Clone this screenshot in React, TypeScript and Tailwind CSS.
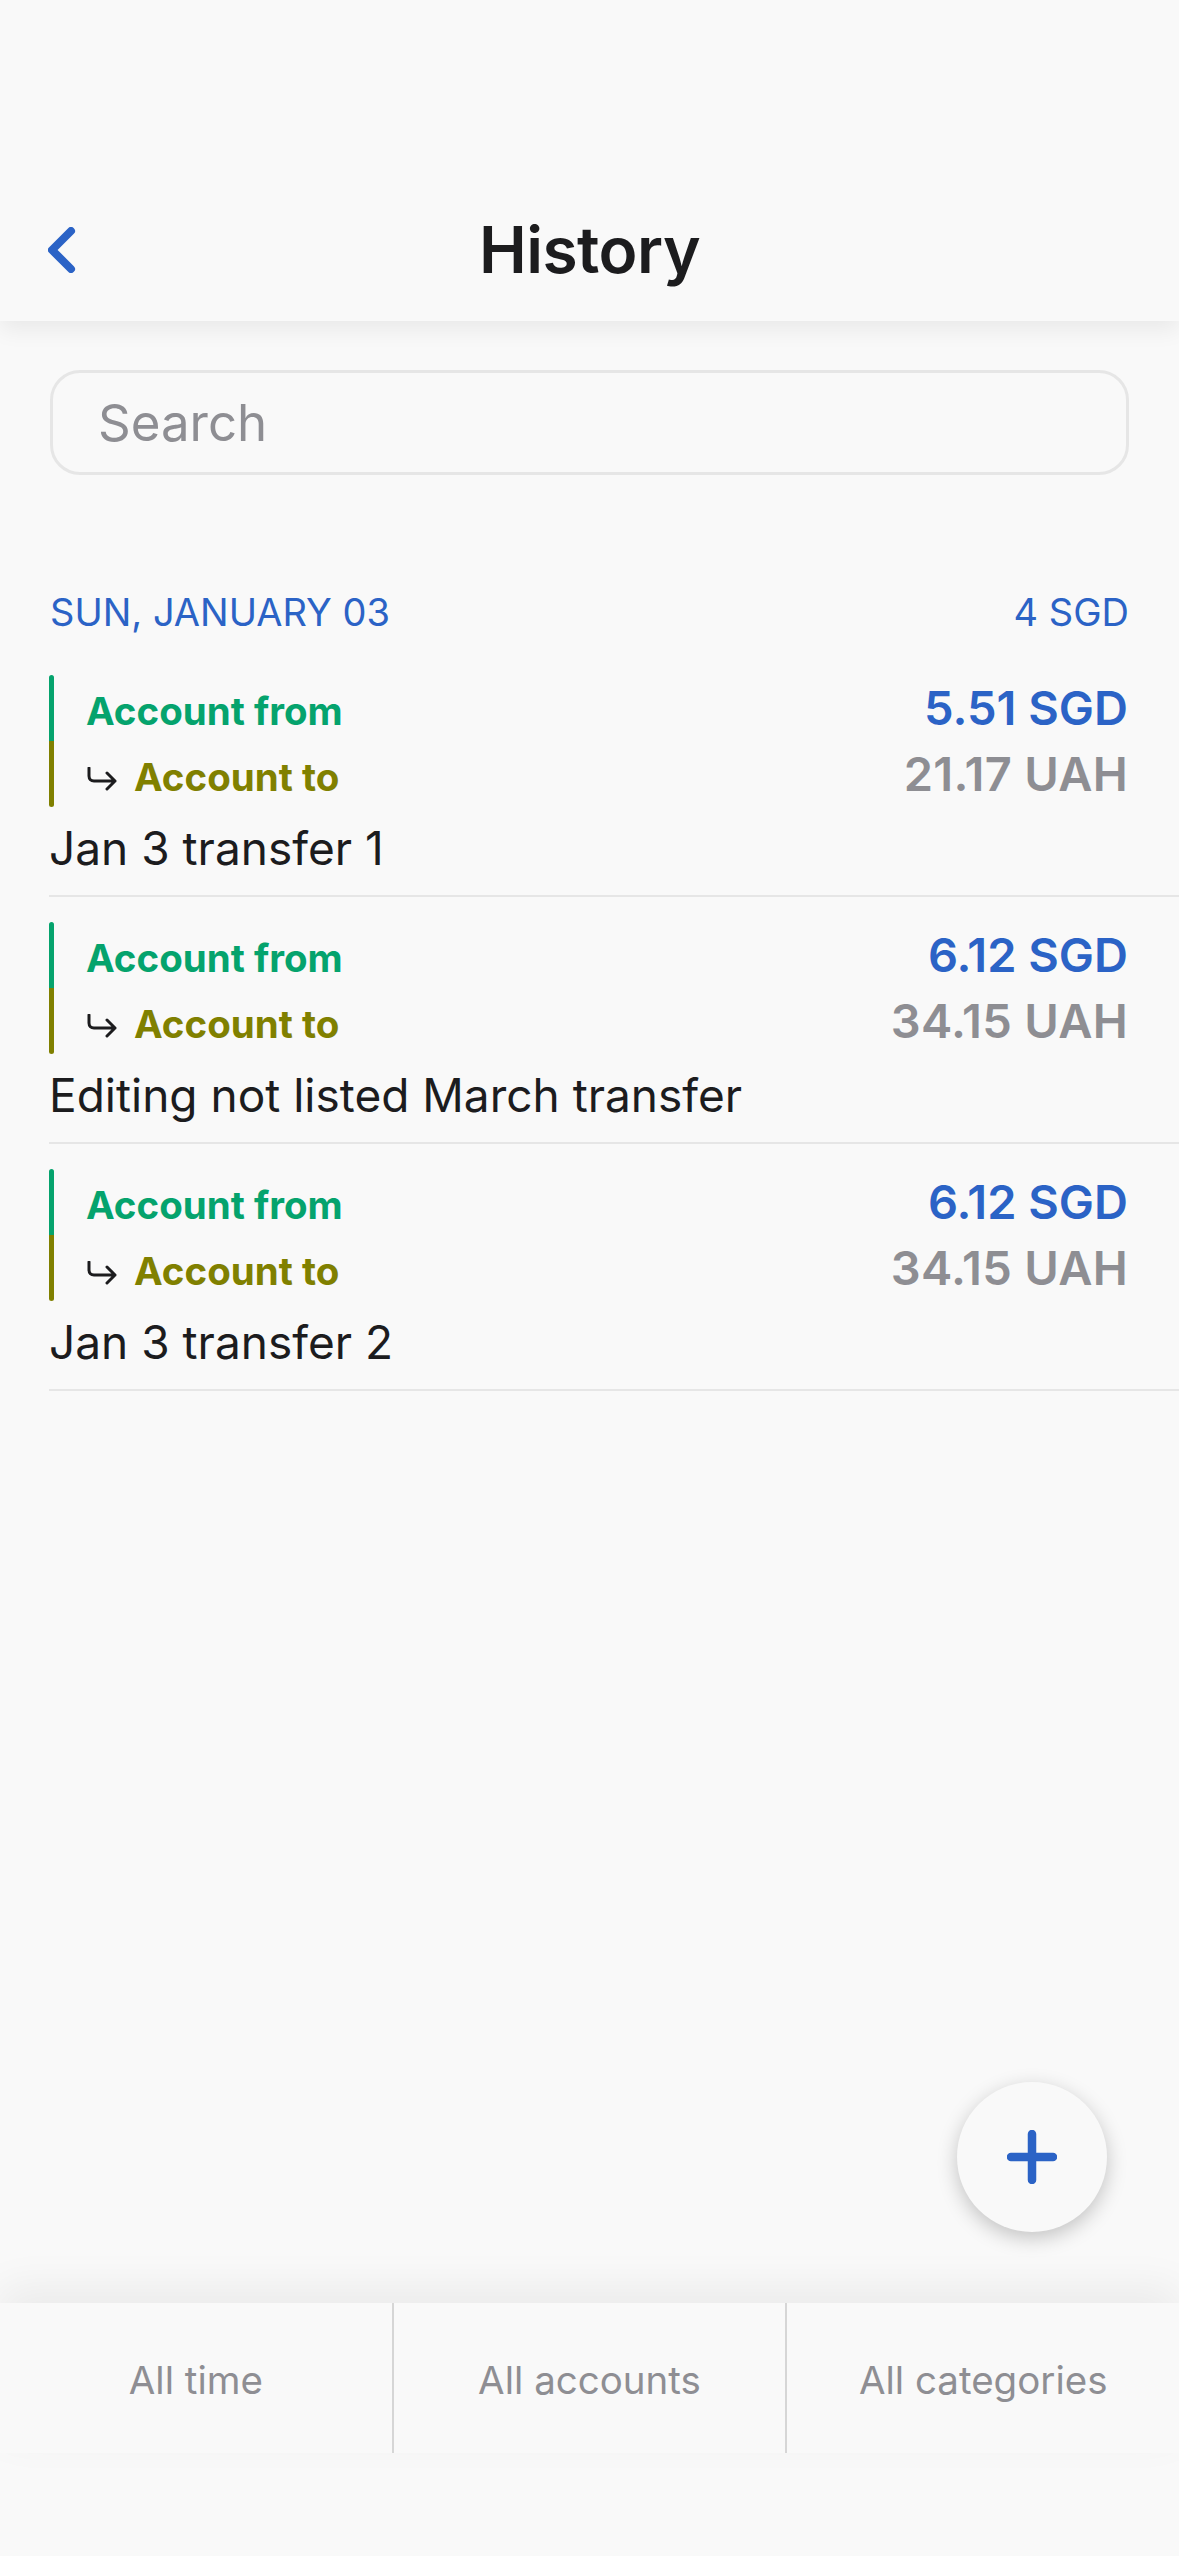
import React from 'react'

type Transfer = {
  amount: string
  converted: string
  note: string
}

const transfers: Transfer[] = [
  { amount: '5.51 SGD', converted: '21.17 UAH', note: 'Jan 3 transfer 1' },
  { amount: '6.12 SGD', converted: '34.15 UAH', note: 'Editing not listed March transfer' },
  { amount: '6.12 SGD', converted: '34.15 UAH', note: 'Jan 3 transfer 2' },
]

function HookArrow() {
  return (
    <svg width="32" height="26" viewBox="0 0 32 26" fill="none" className="shrink-0">
      <path
        d="M3 1v8c0 3 2 5 5 5h21M21 6l8 8-8 8"
        stroke="#1c1c1e"
        strokeWidth="3"
        strokeLinecap="round"
        strokeLinejoin="round"
      />
    </svg>
  )
}

function TransferRow({ item }: { item: Transfer }) {
  return (
    <div className="pl-[49px]">
      <div className="pr-[51px] pt-[25px] pb-[17px]">
        <div className="flex">
          <div className="flex w-[5px] shrink-0 flex-col">
            <div className="h-[66px] rounded-t-full bg-[#05a36d]" />
            <div className="h-[66px] rounded-b-full bg-[#808000]" />
          </div>
          <div className="flex flex-1 flex-col pl-[32px]">
            <div className="flex h-[66px] items-baseline justify-between">
              <span className="text-[38.5px] leading-[66px] font-bold text-[#05a36d]">Account from</span>
              <span className="text-[47px] leading-[66px] font-semibold text-[#2b63c6]">{item.amount}</span>
            </div>
            <div className="flex h-[66px] items-baseline justify-between">
              <span className="flex items-baseline gap-[16px] text-[38.5px] leading-[66px] font-bold text-[#808000]">
                <span className="self-center pt-[6px]">
                  <HookArrow />
                </span>
                Account to
              </span>
              <span className="text-[47px] leading-[66px] font-semibold tracking-[0.3px] text-[#8e8e93]">
                {item.converted}
              </span>
            </div>
          </div>
        </div>
        <div className="mt-[11px] text-[46px] leading-[60px] text-[#1c1c1e]">{item.note}</div>
      </div>
      <div className="h-[2px] bg-[#e6e6e6]" />
    </div>
  )
}

export default function App() {
  return (
    <div
      className="flex h-[2556px] w-[1179px] flex-col overflow-hidden bg-[#f9f9f9]"
      style={{ fontFamily: 'Inter, "Noto Sans", sans-serif' }}
    >
      <header className="relative z-10 h-[321px] shrink-0 bg-[#f9f9f9] pt-[179px] shadow-[0_8px_22px_rgba(0,0,0,0.07)]">
        <div className="relative flex h-[142px] items-center justify-center">
          <button type="button" className="absolute left-[40px] top-1/2 -translate-y-1/2 p-[8px]" aria-label="Back">
            <svg width="28" height="46" viewBox="0 0 28 46" fill="none">
              <path d="M23 4L4 23l19 19" stroke="#2b63c6" strokeWidth="8" strokeLinecap="round" strokeLinejoin="round" />
            </svg>
          </button>
          <h1 className="text-[64px] leading-[80px] font-semibold tracking-[-0.5px] text-[#1c1c1e]">History</h1>
        </div>
      </header>

      <main className="relative flex-1">
        <div className="px-[50px] pt-[49px]">
          <div className="flex h-[105px] items-center rounded-[30px] border-[3px] border-[#e6e6e6] pl-[45px]">
            <span className="text-[51px] leading-none text-[#8e8e93]">Search</span>
          </div>
        </div>

        <div className="mt-[113px] flex items-baseline justify-between px-[50px] text-[38px] leading-[48px] text-[#2b63c6]">
          <span>SUN, JANUARY 03</span>
          <span>4 SGD</span>
        </div>

        <div className="mt-[14px]">
          {transfers.map((t, i) => (
            <TransferRow key={i} item={t} />
          ))}
        </div>

        <button
          type="button"
          aria-label="Add"
          className="absolute bottom-[71px] right-[72px] z-20 flex h-[150px] w-[150px] items-center justify-center rounded-full bg-[#f9f9f9] shadow-[0_6px_20px_rgba(0,0,0,0.22)]"
        >
          <svg width="50" height="54" viewBox="0 0 50 54" fill="none">
            <path d="M25 4v46M4 27h42" stroke="#2b63c6" strokeWidth="8.5" strokeLinecap="round" />
          </svg>
        </button>
      </main>

      <nav className="relative z-10 flex h-[150px] shrink-0 bg-[#f9f9f9] shadow-[0_-16px_40px_rgba(0,0,0,0.06)]">
        {['All time', 'All accounts', 'All categories'].map((label, i) => (
          <div
            key={label}
            className={
              i === 0
                ? 'flex flex-1 items-center justify-center pt-[6px] text-[38.5px] text-[#8e8e93]'
                : 'flex flex-1 items-center justify-center border-l-2 border-[#d6d6d6] pt-[6px] text-[38.5px] text-[#8e8e93]'
            }
          >
            {label}
          </div>
        ))}
      </nav>
      <div className="h-[103px] shrink-0 bg-[#f9f9f9]" />
    </div>
  )
}
